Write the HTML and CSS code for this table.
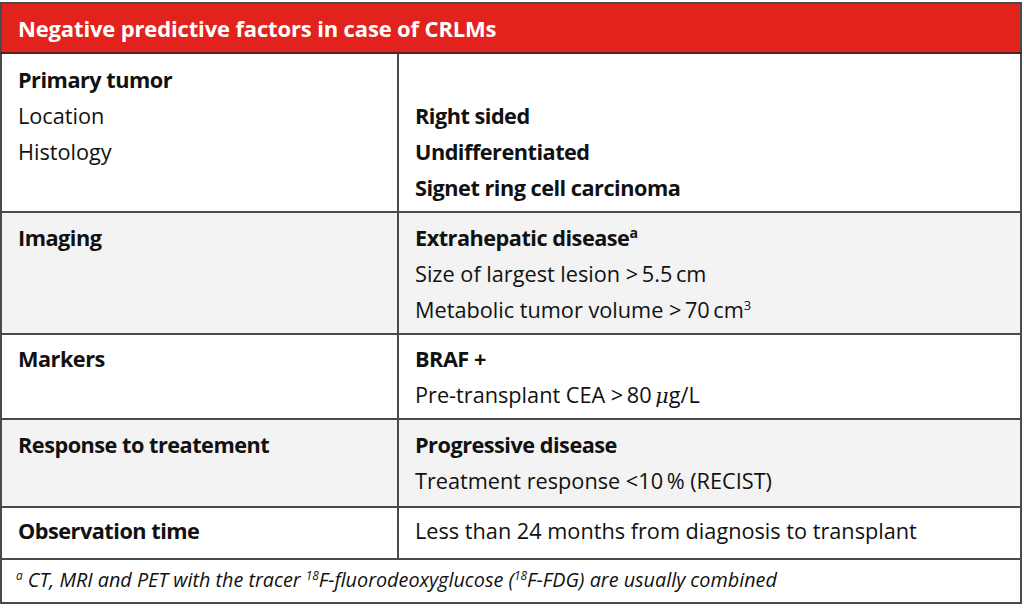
FILE: index.html
```html
<!DOCTYPE html>
<html>
<head>
<meta charset="utf-8">
<link rel="stylesheet" href="styles.css">
</head>
<body>
<table class="factors">
  <colgroup><col class="c1"><col class="c2"></colgroup>
  <thead>
    <tr><th colspan="2" class="title">Negative predictive factors in case of CRLMs</th></tr>
  </thead>
  <tbody>
    <tr class="row r1">
      <td><div class="b">Primary tumor</div><div>Location</div><div>Histology</div></td>
      <td><div>&nbsp;</div><div class="b">Right sided</div><div class="b">Undifferentiated</div><div class="b">Signet ring cell carcinoma</div></td>
    </tr>
    <tr class="row shade r2">
      <td><div class="b">Imaging</div></td>
      <td><div class="b">Extrahepatic disease<sup class="sa">a</sup></div><div>Size of largest lesion &gt;&#8201;5.5&#8201;cm</div><div>Metabolic tumor volume &gt;&#8201;70&#8201;cm<sup class="s3">3</sup></div></td>
    </tr>
    <tr class="row r3">
      <td><div class="b">Markers</div></td>
      <td><div class="b">BRAF +</div><div>Pre-transplant CEA &gt;&#8201;80&#8201;<i class="mu">μ</i>g/L</div></td>
    </tr>
    <tr class="row shade r4">
      <td><div class="b">Response to treatement</div></td>
      <td><div class="b">Progressive disease</div><div>Treatment response &lt;10&#8201;% (RECIST)</div></td>
    </tr>
    <tr class="row r5">
      <td><div class="b">Observation time</div></td>
      <td><div>Less than 24 months from diagnosis to transplant</div></td>
    </tr>
    <tr class="foot">
      <td colspan="2"><sup>a</sup> CT, MRI and PET with the tracer <sup>18</sup>F-fluorodeoxyglucose (<sup>18</sup>F-FDG) are usually combined</td>
    </tr>
  </tbody>
</table>
</body>
</html>
```

FILE: styles.css
```css
html, body {
  margin: 0;
  padding: 0;
  background: #ffffff;
}
body {
  padding-top: 2px;
  font-family: "Open Sans", Roboto, "Liberation Sans", sans-serif;
  color: #111111;
}
.factors {
  width: 1022px;
  border-collapse: collapse;
  border: 2px solid #4a4a4a;
  table-layout: fixed;
}
.c1 { width: 397px; }
.title {
  background: #e2231d;
  color: #ffffff;
  font-weight: 700;
  font-size: 22px;
  letter-spacing: -0.15px;
  text-align: left;
  padding: 0 16px;
  height: 48px;
  border-bottom: 2px solid #5a2020;
}
.row td {
  vertical-align: top;
  font-size: 21.7px;
  line-height: 36px;
  padding: 8px 16px 5px 16px;
  border: 2px solid #4a4a4a;
}
.shade td { background: #f3f3f3; }
.r2 td { padding-top: 7px; padding-bottom: 5px; }
.r3 td { padding-top: 6px; padding-bottom: 4px; }
.r4 td { padding-top: 7px; padding-bottom: 7px; }
.r5 td { padding-top: 5px; padding-bottom: 9px; }
.b { font-weight: 700; letter-spacing: -0.5px; }
sup {
  font-size: 0.6em;
  line-height: 0;
  vertical-align: 0.6em;
}
.sa { font-weight: 700; font-size: 0.65em; }
.mu { font-style: italic; font-family: "DejaVu Serif", serif; font-size: 0.95em; }
.foot td {
  font-style: italic;
  font-size: 19.8px;
  line-height: 26px;
  padding: 7px 14px 9px 14px;
  border: 2px solid #4a4a4a;
}
```
